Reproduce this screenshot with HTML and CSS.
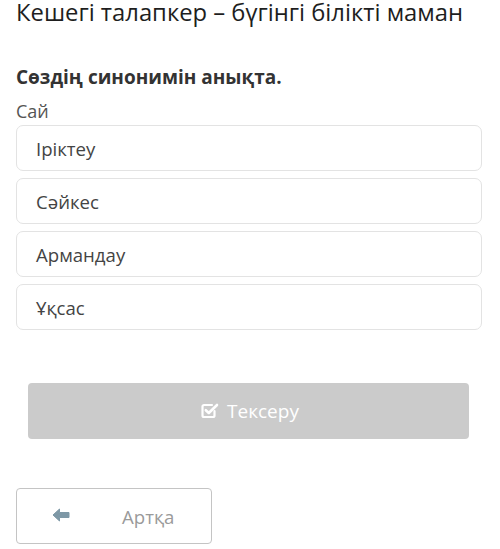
FILE: index.html
```html
<!DOCTYPE html>
<html>
<head>
<meta charset="utf-8">
<link rel="stylesheet" href="styles.css">
</head>
<body>
<div class="page">
  <h1 class="title">Кешегі талапкер – бүгінгі білікті маман</h1>
  <div class="question">Сөздің синонимін анықта.</div>
  <div class="word">Сай</div>
  <div class="options">
    <div class="option">Іріктеу</div>
    <div class="option">Сәйкес</div>
    <div class="option">Армандау</div>
    <div class="option">Ұқсас</div>
  </div>
  <div class="check-wrap">
    <div class="check">
      <svg class="check-icon" viewBox="0 0 18 17" width="18" height="17">
        <path d="M13.5 9 V13.5 A1.5 1.5 0 0 1 12 15 H3 A1.5 1.5 0 0 1 1.5 13.5 V4.5 A1.5 1.5 0 0 1 3 3 H11" fill="none" stroke="#fff" stroke-width="2.2" stroke-linecap="round"/>
        <path d="M4.8 8.2 L7.8 11 L16 3" fill="none" stroke="#fff" stroke-width="2.6" stroke-linecap="round" stroke-linejoin="round"/>
      </svg>
      <span>Тексеру</span>
    </div>
  </div>
  <div class="back">
    <svg class="arrow" viewBox="0 0 18 14" width="18" height="14">
      <path d="M1 7 L7.5 1 L7.5 4.5 L17 4.5 L17 9.5 L7.5 9.5 L7.5 13 Z" fill="#7e98a6" stroke="#7e98a6" stroke-width="1" stroke-linejoin="round"/>
    </svg>
    <span>Артқа</span>
  </div>
</div>
</body>
</html>
```

FILE: styles.css
```css
* { box-sizing: border-box; }
html, body { margin: 0; padding: 0; background: #fff; }
body { font-family: "Open Sans", "Noto Sans", sans-serif; }
.page { padding: 0 16px 0 16px; width: 500px; }
.title {
  margin: 0;
  font-weight: 400;
  font-size: 23.8px;
  line-height: 24px;
  white-space: nowrap;
  color: #1e1e1e;
}
.question {
  margin-top: 41px;
  font-weight: 700;
  font-size: 19px;
  line-height: 24px;
  color: #333;
}
.word {
  margin-top: 10px;
  font-size: 18px;
  line-height: 24px;
  color: #555;
}
.options {
  margin-top: 2px;
  display: flex;
  flex-direction: column;
  gap: 7px;
  width: 466px;
}
.option {
  height: 46px;
  border: 1px solid #e3e3e3;
  border-radius: 7px;
  padding-left: 19px;
  display: flex;
  align-items: center;
  font-size: 18.6px;
  color: #444;
}
.check-wrap { padding: 53px 15px 0 12px; }
.check {
  height: 56px;
  width: 441px;
  background: #cbcbcb;
  border-radius: 4px;
  display: flex;
  align-items: center;
  justify-content: center;
  gap: 8px;
  color: #fff;
  font-size: 19px;
  padding-left: 3px;
}
.check-icon { display: block; margin-top: -2px; }
.back {
  margin-top: 49px;
  width: 196px;
  height: 56px;
  border: 1px solid #c4c4c4;
  border-radius: 4px;
  display: flex;
  align-items: center;
  padding-left: 35px;
  font-size: 18.6px;
  color: #9a9a9a;
}
.back .arrow { display: block; margin-top: -3px; }
.back span { margin-left: 52px; }
```
